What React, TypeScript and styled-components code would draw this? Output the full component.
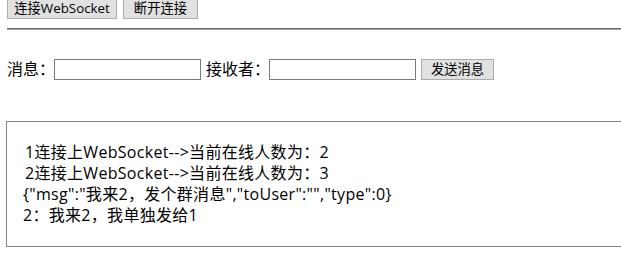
import React from 'react';
import styled, { createGlobalStyle } from 'styled-components';

const GlobalStyle = createGlobalStyle`
  html, body {
    margin: 0;
    padding: 0;
    background: #ffffff;
    overflow: hidden;
  }
  body {
    font-family: "Open Sans", "Noto Sans CJK SC", sans-serif;
    color: #000000;
  }
`;

const messages = [
  { text: '1连接上WebSocket-->当前在线人数为：2', indent: true },
  { text: '2连接上WebSocket-->当前在线人数为：3', indent: true },
  { text: '{"msg":"我来2，发个群消息","toUser":"","type":0}', indent: false },
  { text: '2：我来2，我单独发给1', indent: false },
];

function App() {
  return (
    <Page>
      <GlobalStyle />
      <Toolbar>
        <Button $width={110}>连接WebSocket</Button>
        <Button $width={75}>断开连接</Button>
      </Toolbar>
      <Divider />
      <SendRow>
        <Label>消息：</Label>
        <TextInput type="text" />
        <Label $gap>接收者：</Label>
        <TextInput type="text" />
        <Button $width={73} $gap>发送消息</Button>
      </SendRow>
      <MessageBox>
        {messages.map((m, i) => (
          <MessageLine key={i} $indent={m.indent}>
            {m.text}
          </MessageLine>
        ))}
      </MessageBox>
    </Page>
  );
}

export default App;

const Page = styled.div`
  width: 700px;
  padding-left: 7px;
  display: flex;
  flex-direction: column;
`;

const Toolbar = styled.div`
  display: flex;
  gap: 6px;
  margin-top: -2px;
`;

const Button = styled.button<{ $width: number; $gap?: boolean }>`
  box-sizing: border-box;
  width: ${(p) => p.$width}px;
  height: 21px;
  padding: 0;
  margin: 0 0 0 ${(p) => (p.$gap ? 5 : 0)}px;
  background: #e1e1e1;
  border: 1px solid #adadad;
  border-radius: 0;
  font-family: "Open Sans", "Noto Sans CJK SC", sans-serif;
  font-size: 13.33px;
  line-height: 19px;
  color: #000000;
  white-space: nowrap;
`;

const Divider = styled.hr`
  margin: 9px 0 0 0;
  height: 0;
  border: none;
  border-top: 1px solid #6a6a6a;
  border-bottom: 1px solid #a4a4a4;
`;

const SendRow = styled.div`
  display: flex;
  align-items: center;
  margin-top: 29px;
  height: 21px;
`;

const Label = styled.span<{ $gap?: boolean }>`
  font-size: 16px;
  line-height: 21px;
  margin-left: ${(p) => (p.$gap ? 5 : 0)}px;
  white-space: nowrap;
`;

const TextInput = styled.input`
  box-sizing: border-box;
  width: 147px;
  height: 21px;
  margin: 0 0 0 -1px;
  padding: 1px 2px;
  border: 1px solid #7a7a7a;
  border-radius: 0;
  background: #ffffff;
  font-size: 13.33px;
  outline: none;
`;

const MessageBox = styled.div`
  margin: 41px 0 0 -1px;
  padding: 20px 16px;
  border: 1px solid #858585;
`;

const MessageLine = styled.div<{ $indent: boolean }>`
  font-size: 16px;
  line-height: 21px;
  letter-spacing: 0.3px;
  padding-left: ${(p) => (p.$indent ? 2 : 0)}px;
  white-space: nowrap;
`;
